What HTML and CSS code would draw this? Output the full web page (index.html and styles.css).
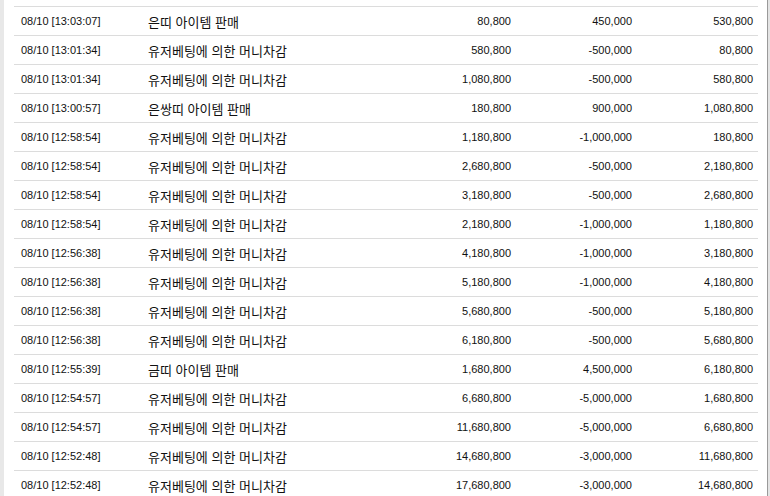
FILE: index.html
```html
<!DOCTYPE html>
<html lang="ko">
<head>
<meta charset="utf-8">
<link rel="stylesheet" href="styles.css">
</head>
<body>
<div class="frame">
  <div class="strip"></div>
  <div class="main">
    <div class="table">
      <div class="row"><span class="date">08/10 [13:03:07]</span><span class="desc">은띠 아이템 판매</span><span class="num">80,800</span><span class="num">450,000</span><span class="num">530,800</span></div>
      <div class="row"><span class="date">08/10 [13:01:34]</span><span class="desc">유저베팅에 의한 머니차감</span><span class="num">580,800</span><span class="num">-500,000</span><span class="num">80,800</span></div>
      <div class="row"><span class="date">08/10 [13:01:34]</span><span class="desc">유저베팅에 의한 머니차감</span><span class="num">1,080,800</span><span class="num">-500,000</span><span class="num">580,800</span></div>
      <div class="row"><span class="date">08/10 [13:00:57]</span><span class="desc">은쌍띠 아이템 판매</span><span class="num">180,800</span><span class="num">900,000</span><span class="num">1,080,800</span></div>
      <div class="row"><span class="date">08/10 [12:58:54]</span><span class="desc">유저베팅에 의한 머니차감</span><span class="num">1,180,800</span><span class="num">-1,000,000</span><span class="num">180,800</span></div>
      <div class="row"><span class="date">08/10 [12:58:54]</span><span class="desc">유저베팅에 의한 머니차감</span><span class="num">2,680,800</span><span class="num">-500,000</span><span class="num">2,180,800</span></div>
      <div class="row"><span class="date">08/10 [12:58:54]</span><span class="desc">유저베팅에 의한 머니차감</span><span class="num">3,180,800</span><span class="num">-500,000</span><span class="num">2,680,800</span></div>
      <div class="row"><span class="date">08/10 [12:58:54]</span><span class="desc">유저베팅에 의한 머니차감</span><span class="num">2,180,800</span><span class="num">-1,000,000</span><span class="num">1,180,800</span></div>
      <div class="row"><span class="date">08/10 [12:56:38]</span><span class="desc">유저베팅에 의한 머니차감</span><span class="num">4,180,800</span><span class="num">-1,000,000</span><span class="num">3,180,800</span></div>
      <div class="row"><span class="date">08/10 [12:56:38]</span><span class="desc">유저베팅에 의한 머니차감</span><span class="num">5,180,800</span><span class="num">-1,000,000</span><span class="num">4,180,800</span></div>
      <div class="row"><span class="date">08/10 [12:56:38]</span><span class="desc">유저베팅에 의한 머니차감</span><span class="num">5,680,800</span><span class="num">-500,000</span><span class="num">5,180,800</span></div>
      <div class="row"><span class="date">08/10 [12:56:38]</span><span class="desc">유저베팅에 의한 머니차감</span><span class="num">6,180,800</span><span class="num">-500,000</span><span class="num">5,680,800</span></div>
      <div class="row"><span class="date">08/10 [12:55:39]</span><span class="desc">금띠 아이템 판매</span><span class="num">1,680,800</span><span class="num">4,500,000</span><span class="num">6,180,800</span></div>
      <div class="row"><span class="date">08/10 [12:54:57]</span><span class="desc">유저베팅에 의한 머니차감</span><span class="num">6,680,800</span><span class="num">-5,000,000</span><span class="num">1,680,800</span></div>
      <div class="row"><span class="date">08/10 [12:54:57]</span><span class="desc">유저베팅에 의한 머니차감</span><span class="num">11,680,800</span><span class="num">-5,000,000</span><span class="num">6,680,800</span></div>
      <div class="row"><span class="date">08/10 [12:52:48]</span><span class="desc">유저베팅에 의한 머니차감</span><span class="num">14,680,800</span><span class="num">-3,000,000</span><span class="num">11,680,800</span></div>
      <div class="row"><span class="date">08/10 [12:52:48]</span><span class="desc">유저베팅에 의한 머니차감</span><span class="num">17,680,800</span><span class="num">-3,000,000</span><span class="num">14,680,800</span></div>
    </div>
  </div>
  <div class="edge"></div>
</div>
</body>
</html>
```
FILE: styles.css
```css
html, body {
  margin: 0;
  padding: 0;
  background: #ffffff;
  overflow: hidden;
}
.frame {
  display: flex;
  width: 770px;
  height: 496px;
}
.strip {
  width: 4px;
  background: #e8e8e8;
  flex: none;
}
.main {
  flex: 1;
  background: #ffffff;
  padding: 6px 0 0 10px;
}
.edge {
  width: 2px;
  flex: none;
  border-left: 1px solid #9a9a9a;
  background: #e4e4e4;
}
.table {
  width: 744px;
  border-top: 1px solid #dcdcdc;
}
.row {
  display: grid;
  grid-template-columns: 127px 254px 121px 121px 121px;
  height: 28px;
  align-items: center;
  border-bottom: 1px solid #dcdcdc;
  color: #111111;
}
.date {
  padding-left: 7px;
  font-family: "Liberation Sans", Arial, sans-serif;
  font-size: 11px;
}
.desc {
  padding-left: 7px;
  font-family: "Noto Sans CJK KR", "Liberation Sans", sans-serif;
  font-size: 13px;
}
.num {
  text-align: right;
  padding-right: 5px;
  font-family: "Liberation Sans", Arial, sans-serif;
  font-size: 11px;
}
```
